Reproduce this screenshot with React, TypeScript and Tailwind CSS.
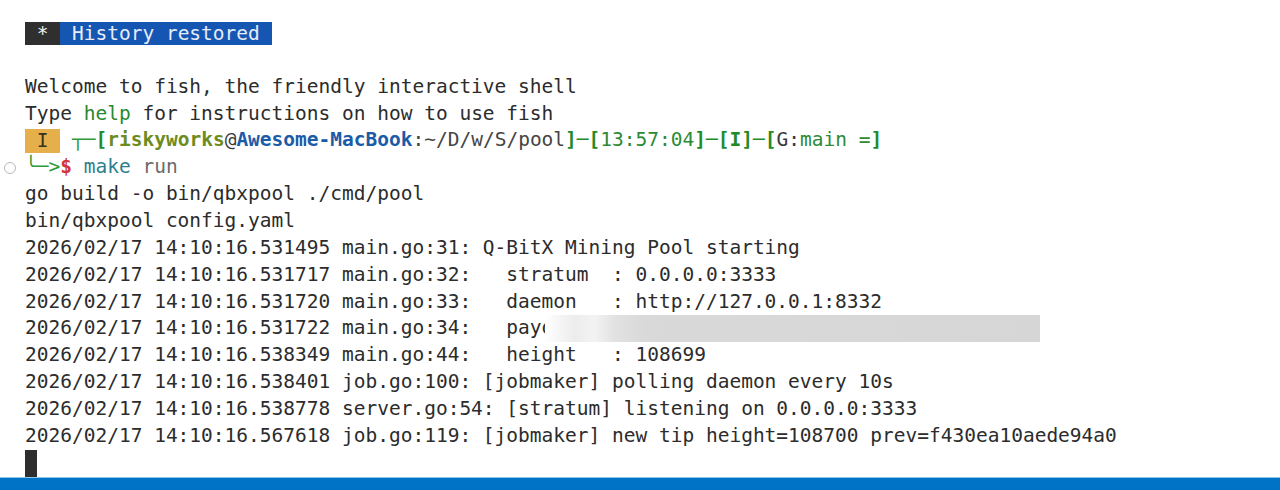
const mono = { fontFamily: '"DejaVu Sans Mono", "Liberation Mono", monospace' }

const logLines: [string, string][] = [
  ['2026/02/17 14:10:16.531495 ', 'main.go:31: Q-BitX Mining Pool starting'],
  ['2026/02/17 14:10:16.531717 ', 'main.go:32:   stratum  : 0.0.0.0:3333'],
  ['2026/02/17 14:10:16.531720 ', 'main.go:33:   daemon   : http://127.0.0.1:8332'],
]

const tailLines: [string, string][] = [
  ['2026/02/17 14:10:16.538349 ', 'main.go:44:   height   : 108699'],
  ['2026/02/17 14:10:16.538401 ', 'job.go:100: [jobmaker] polling daemon every 10s'],
  ['2026/02/17 14:10:16.538778 ', 'server.go:54: [stratum] listening on 0.0.0.0:3333'],
  ['2026/02/17 14:10:16.567618 ', 'job.go:119: [jobmaker] new tip height=108700 prev=f430ea10aede94a0'],
]

function Line({ children, mark }: { children?: React.ReactNode; mark?: boolean }) {
  return (
    <div className="flex h-[26.87px] items-center whitespace-pre">
      <div className="flex w-[25px] shrink-0 items-center justify-start pl-[4px]">
        {mark && <span className="block h-[12px] w-[12px] rounded-full border-[1.5px] border-[#b8b8b8]" />}
      </div>
      <div className="leading-[26.87px]">{children}</div>
    </div>
  )
}

export default function App() {
  return (
    <div className="flex h-[490px] w-[1280px] flex-col overflow-hidden bg-white text-[19.5px] text-[#2c2c2c]" style={mono}>
      <div className="flex-1 pt-[20px]">
        <Line>
          <span className="inline-block bg-[#2f2f2f] align-middle leading-[23px] text-[#f0f0f0]"> * </span>
          <span className="inline-block bg-[#1556b3] align-middle leading-[23px] text-[#e6ecf7]"> History restored </span>
        </Line>
        <Line />
        <Line>Welcome to fish, the friendly interactive shell</Line>
        <Line>
          Type <span className="text-[#2a8a2e]">help</span> for instructions on how to use fish
        </Line>
        <Line>
          <span className="inline-block bg-[#e5b04c] align-middle leading-[24px] text-[#3a3020]"> I </span>
          <span> </span>
          <span className="text-[#2e9a3a]">┬─</span>
          <span className="font-bold text-[#238a2a]">[</span>
          <span className="font-bold text-[#6e8c1e]">riskyworks</span>
          <span className="text-[#3a3a3a]">@</span>
          <span className="font-bold text-[#1b5ba8]">Awesome-MacBook</span>
          <span className="text-[#444]">:~/D/w/S/pool</span>
          <span className="font-bold text-[#238a2a]">]─[</span>
          <span className="text-[#2c8a34]">13:57:04</span>
          <span className="font-bold text-[#238a2a]">]─[I]─[</span>
          <span className="text-[#3a3a3a]">G:</span>
          <span className="text-[#2c8a34]">main =</span>
          <span className="font-bold text-[#238a2a]">]</span>
        </Line>
        <Line mark>
          <span className="text-[#2e9a3a]">╰─&gt;</span>
          <span className="font-bold text-[#d0373a]">$</span>
          <span> </span>
          <span className="text-[#2f7f8c]">make</span>
          <span className="text-[#6a6a6a]"> run</span>
        </Line>
        <Line>go build -o bin/qbxpool ./cmd/pool</Line>
        <Line>bin/qbxpool config.yaml</Line>
        {logLines.map(([a, b]) => (
          <Line key={a}>
            {a}
            {b}
          </Line>
        ))}
        <Line>
          2026/02/17 14:10:16.531722 main.go:34:   pay
          <span className="inline-block w-[3px] overflow-hidden align-top">o</span>
          <span className="inline-block h-[27px] w-[495px] bg-[linear-gradient(to_right,#ffffff_0%,#ececec_6%,#f3f3f3_10%,#e2e2e2_14%,#d9d9d9_20%,#d6d6d6_100%)] align-top" />
        </Line>
        {tailLines.map(([a, b]) => (
          <Line key={a}>
            {a}
            {b}
          </Line>
        ))}
        <Line>
          <span className="inline-block h-[27px] w-[12px] bg-[#2e2e2e] align-top" />
        </Line>
      </div>
      <div className="h-[15px] shrink-0 border-t border-[#8cc4ee] bg-[#0173c6]" />
    </div>
  )
}
